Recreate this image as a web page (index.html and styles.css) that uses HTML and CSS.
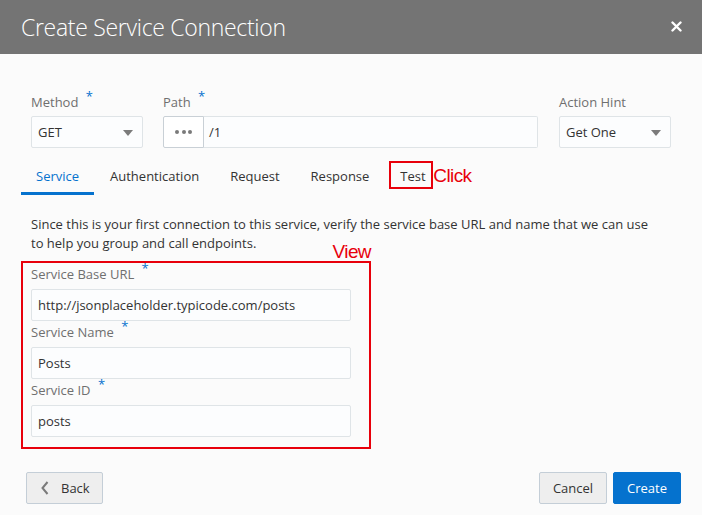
FILE: index.html
```html
<!DOCTYPE html>
<html>
<head>
<meta charset="utf-8">
<link rel="stylesheet" href="styles.css">
</head>
<body>
<div class="dialog">
  <header class="dlg-header">
    <h1 class="dlg-title">Create Service Connection</h1>
    <button class="close-btn" aria-label="Close">
      <svg width="11" height="11" viewBox="0 0 11 11"><path d="M1.5 1.5 L9.5 9.5 M9.5 1.5 L1.5 9.5" stroke="#fff" stroke-width="2.4" stroke-linecap="round"/></svg>
    </button>
  </header>

  <main class="dlg-body">
    <div class="top-row">
      <div class="field method">
        <label class="lbl">Method <span class="req">*</span></label>
        <div class="select"><span>GET</span><span class="caret"></span></div>
      </div>
      <div class="field path">
        <label class="lbl">Path <span class="req">*</span></label>
        <div class="path-group">
          <button class="dots-btn"><span></span><span></span><span></span></button>
          <div class="input path-input">/1</div>
        </div>
      </div>
      <div class="field hint">
        <label class="lbl">Action Hint</label>
        <div class="select"><span>Get One</span><span class="caret"></span></div>
      </div>
    </div>

    <nav class="tabs">
      <a class="tab active">Service</a>
      <a class="tab">Authentication</a>
      <a class="tab">Request</a>
      <a class="tab">Response</a>
      <a class="tab test-tab">Test<span class="anno-box"></span><span class="anno-text click">Click</span></a>
    </nav>

    <p class="intro">Since this is your first connection to this service, verify the service base URL and name that we can use to help you group and call endpoints.</p>

    <section class="svc-box">
      <span class="anno-text view">View</span>
      <div class="svc-field">
        <label class="lbl">Service Base URL <span class="req">*</span></label>
        <div class="input">http://jsonplaceholder.typicode.com/posts</div>
      </div>
      <div class="svc-field">
        <label class="lbl">Service Name <span class="req">*</span></label>
        <div class="input">Posts</div>
      </div>
      <div class="svc-field">
        <label class="lbl">Service ID <span class="req">*</span></label>
        <div class="input">posts</div>
      </div>
    </section>
  </main>

  <footer class="dlg-footer">
    <button class="btn back">
      <svg width="8" height="14" viewBox="0 0 8 14"><path d="M6.5 1 L1.5 7 L6.5 13" fill="none" stroke="#7a7a7a" stroke-width="2"/></svg>
      <span>Back</span>
    </button>
    <div class="spacer"></div>
    <button class="btn">Cancel</button>
    <button class="btn primary">Create</button>
  </footer>
</div>
</body>
</html>
```

FILE: styles.css
```css
* { box-sizing: border-box; }
html, body { margin: 0; padding: 0; }
body {
  width: 702px;
  height: 515px;
  background: #fbfbfb;
  font-family: "Open Sans", "Noto Sans", sans-serif;
  font-size: 13px;
  color: #333;
  overflow: hidden;
}
.dialog { display: flex; flex-direction: column; height: 515px; }

.dlg-header {
  height: 54px;
  background: #747474;
  display: flex;
  align-items: center;
  justify-content: space-between;
  padding: 0 20px 0 21px;
}
.dlg-title {
  margin: 0;
  font-weight: 300;
  font-size: 23px;
  color: #fff;
  letter-spacing: -0.3px;
  padding-bottom: 1px;
}
.close-btn {
  border: 0;
  background: transparent;
  padding: 0;
  width: 11px;
  height: 11px;
  display: flex;
  margin-top: -1px;
}

.dlg-body { padding: 37px 21px 0; flex: 1; }

.lbl {
  display: block;
  color: #6f6f6f;
  line-height: 20px;
  height: 20px;
  padding-top: 1px;
  white-space: nowrap;
}
.req {
  color: #0572ce;
  position: relative;
  top: -6px;
  margin-left: 4px;
}

.top-row {
  display: flex;
  gap: 20px;
  padding: 0 10px;
}
.field .lbl { margin-bottom: 5px; }
.method, .hint { width: 112px; flex: none; }
.hint { margin-left: 1px; }
.path { flex: 1; }

.select, .input {
  height: 32px;
  border: 1px solid #dfe4e7;
  background: #fcfdfe;
  border-radius: 2px;
  display: flex;
  align-items: center;
  padding: 0 6px;
  color: #333;
  font-size: 13px;
}
.select { justify-content: space-between; padding-right: 9px; }
.caret {
  width: 0; height: 0;
  border-left: 5px solid transparent;
  border-right: 5px solid transparent;
  border-top: 6px solid #7b7b7b;
  margin-top: 1px;
}
.path-group { display: flex; }
.dots-btn {
  width: 41px;
  height: 32px;
  border: 1px solid #c9d0d6;
  background: #fff;
  border-radius: 2px 0 0 2px;
  display: flex;
  align-items: center;
  justify-content: center;
  gap: 2.5px;
  padding: 0;
}
.dots-btn span { width: 4px; height: 4px; border-radius: 50%; background: #7a7a7a; }
.path-input { flex: 1; border-left: 0; border-radius: 0 2px 2px 0; padding-left: 5px; }

.tabs {
  display: flex;
  margin-top: 13px;
  height: 34px;
}
.tab {
  position: relative;
  padding: 0 15px;
  line-height: 31px;
  color: #333;
  border-bottom: 3px solid transparent;
  white-space: nowrap;
}
.tab.active { color: #0572ce; border-bottom-color: #0572ce; }
.tab + .tab { margin-left: 1px; }
.anno-box {
  position: absolute;
  left: 4px; right: 8px;
  top: 0; bottom: 3px;
  border: 2px solid #e8000b;
}
.anno-text {
  position: absolute;
  color: #e8000b;
  font-family: "Liberation Sans", "Noto Sans", sans-serif;
  font-size: 19px;
  letter-spacing: -0.6px;
  white-space: nowrap;
}
.click { left: 48px; top: 4px; line-height: 22px; }

.intro {
  margin: 20px 10px 0;
  max-width: 625px;
  line-height: 19px;
  color: #333;
}

.svc-box {
  position: relative;
  margin-top: 8px;
  width: 350px;
  border: 2px solid #e8000b;
  padding: 0 18px 10px 8px;
}
.view { right: -2px; top: -21px; line-height: 20px; }
.svc-field .lbl { margin-bottom: 6px; }

.dlg-footer {
  display: flex;
  align-items: center;
  padding: 0 21px 11px 26px;
  gap: 6px;
}
.spacer { flex: 1; }
.btn {
  height: 32px;
  min-width: 68px;
  border: 1px solid #c4ced7;
  background: #eeeeee;
  border-radius: 2px;
  font-family: "Open Sans", "Noto Sans", sans-serif;
  font-size: 13px;
  color: #333;
  padding: 0 12px;
  display: flex;
  align-items: center;
  justify-content: center;
}
.btn.back { width: 77px; gap: 12px; justify-content: flex-start; padding-left: 14px; }
.btn.primary { background: #0572ce; border-color: #0572ce; color: #fff; }
```
